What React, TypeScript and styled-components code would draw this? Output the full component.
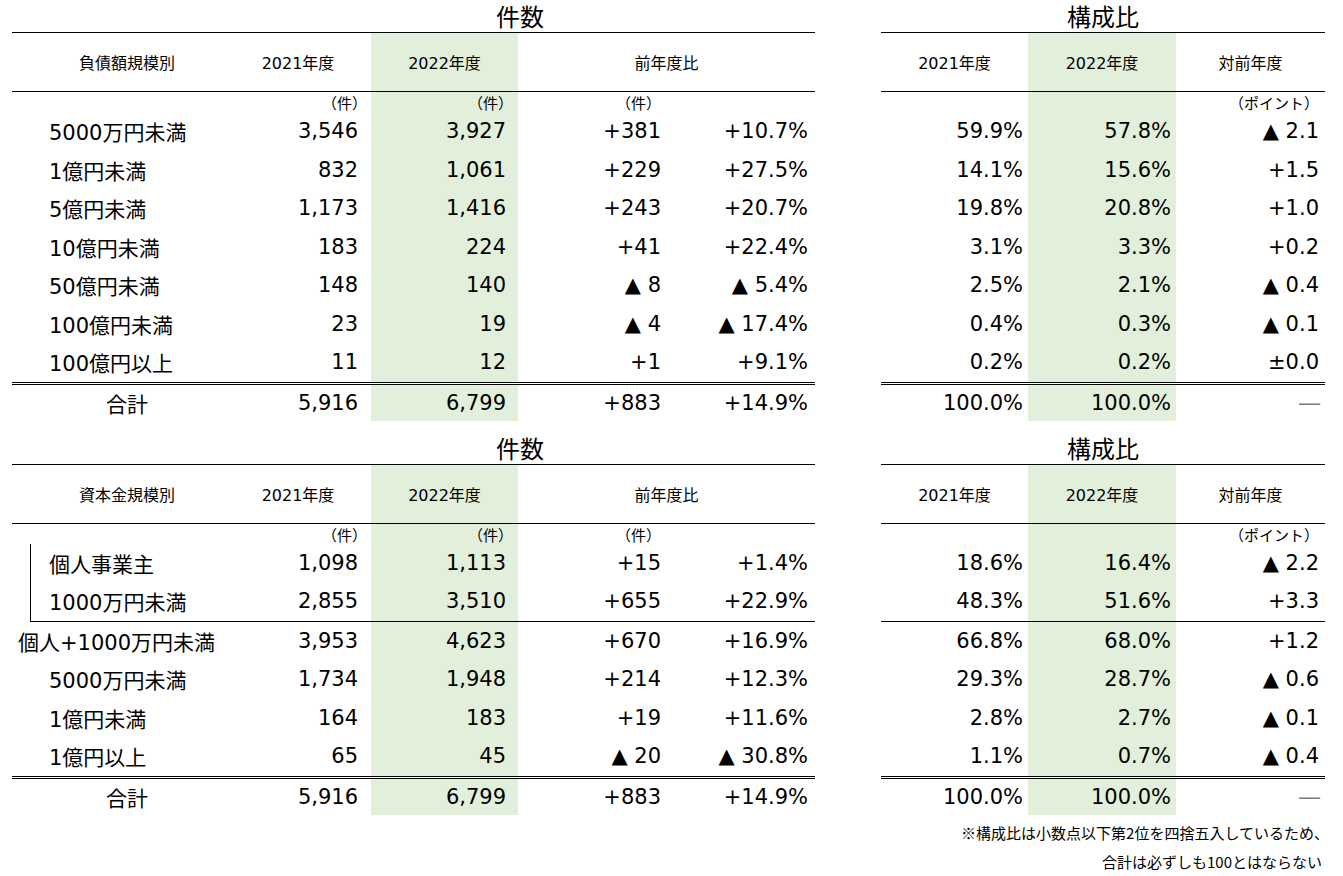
import React from "react";
import styled, { createGlobalStyle } from "styled-components";

const GlobalStyle = createGlobalStyle`
  *, *::before, *::after { box-sizing: border-box; }
  html, body { margin: 0; padding: 0; background: #fff; }
  body {
    font-family: "DejaVu Sans", "Noto Sans CJK JP", sans-serif;
    color: #000;
  }
`;

type Col = { w: number; pad: number; unitPad?: number; green?: boolean };

const LEFT_COLS: Col[] = [
  { w: 213, pad: 0 },
  { w: 146, pad: 13, unitPad: 4 },
  { w: 147, pad: 12, unitPad: 5, green: true },
  { w: 148, pad: 5, unitPad: 5 },
  { w: 149, pad: 7 },
];

const RIGHT_COLS: Col[] = [
  { w: 147, pad: 5 },
  { w: 148, pad: 5, green: true },
  { w: 149, pad: 6, unitPad: 6 },
];

const template = (cols: Col[], firstShrink = 0) =>
  cols.map((c, i) => `${i === 0 ? c.w - firstShrink : c.w}px`).join(" ");

const Page = styled.div`
  width: 1343px;
  padding-left: 12px;
`;

const Section = styled.div<{ $top: number }>`
  display: flex;
  gap: 66px;
  margin-top: ${(p) => p.$top}px;
`;

const TableBox = styled.div<{ $width: number }>`
  width: ${(p) => p.$width}px;
  display: flex;
  flex-direction: column;
`;

const Title = styled.div<{ $shift: number }>`
  height: 32px;
  line-height: 32px;
  font-size: 24px;
  text-align: center;
  padding-left: ${(p) => p.$shift}px;
  font-family: "Noto Sans CJK JP", sans-serif;
`;

const Row = styled.div<{ $cols: string; $h: number; $line?: "single" | "double" }>`
  display: grid;
  grid-template-columns: ${(p) => p.$cols};
  height: ${(p) => p.$h}px;
  font-size: 21px;
  border-top: ${(p) =>
    p.$line === "double" ? "3px double #000" : p.$line === "single" ? "1px solid #000" : "none"};
`;

const HeaderRow = styled(Row)`
  font-size: 16px;
  border-top: 1px solid #000;
  border-bottom: 1px solid #000;
`;

const UnitRow = styled(Row)`
  font-size: 15px;
  font-family: "Noto Sans CJK JP", sans-serif;
`;

const Cell = styled.div<{
  $align?: "left" | "right" | "center";
  $pr?: number;
  $pl?: number;
  $green?: boolean;
  $span?: number;
  $muted?: boolean;
}>`
  display: flex;
  align-items: center;
  justify-content: ${(p) =>
    p.$align === "left" ? "flex-start" : p.$align === "center" ? "center" : "flex-end"};
  padding-right: ${(p) => p.$pr ?? 0}px;
  padding-left: ${(p) => p.$pl ?? 0}px;
  background: ${(p) => (p.$green ? "#e2efda" : "transparent")};
  grid-column: span ${(p) => p.$span ?? 1};
  white-space: nowrap;
  color: ${(p) => (p.$muted ? "#7a7a7a" : "#000")};
`;

const Group = styled.div<{ $bracket?: boolean }>`
  margin-left: ${(p) => (p.$bracket ? 18 : 0)}px;
  border-left: ${(p) => (p.$bracket ? "1px solid #000" : "none")};
  border-bottom: 1px solid #000;
`;

const Notes = styled.div`
  margin-top: 3px;
  font-family: "Noto Sans CJK JP", sans-serif;
  font-size: 15px;
  line-height: 29px;
  text-align: right;
`;

const NoteLine = styled.div<{ $pr: number }>`
  padding-right: ${(p) => p.$pr}px;
`;

type DataRow = { label: string; indent: number; left: string[]; right: string[] };

const ROW_H = 38.5;

const LabelRow = ({ cols, r, shrink = 0 }: { cols: Col[]; r: DataRow; shrink?: number }) => (
  <Row $cols={template(cols, shrink)} $h={ROW_H}>
    <Cell $align="left" $pl={r.indent}>
      {r.label}
    </Cell>
    {r.left.map((v, i) => (
      <Cell key={i} $pr={cols[i + 1].pad} $green={cols[i + 1].green}>
        {v}
      </Cell>
    ))}
  </Row>
);

const ValueRow = ({ r }: { r: DataRow }) => (
  <Row $cols={template(RIGHT_COLS)} $h={ROW_H}>
    {r.right.map((v, i) => (
      <Cell key={i} $pr={RIGHT_COLS[i].pad} $green={RIGHT_COLS[i].green}>
        {v}
      </Cell>
    ))}
  </Row>
);

const LeftHeader = ({ label }: { label: string }) => (
  <>
    <HeaderRow $cols={template(LEFT_COLS)} $h={60}>
      <Cell $align="center" $pl={17}>
        {label}
      </Cell>
      <Cell $align="center">2021年度</Cell>
      <Cell $align="center" $green>
        2022年度
      </Cell>
      <Cell $align="center" $span={2}>
        前年度比
      </Cell>
    </HeaderRow>
    <UnitRow $cols={template(LEFT_COLS)} $h={20}>
      <Cell />
      <Cell $pr={LEFT_COLS[1].unitPad}>（件）</Cell>
      <Cell $pr={LEFT_COLS[2].unitPad} $green>
        （件）
      </Cell>
      <Cell $pr={LEFT_COLS[3].unitPad}>（件）</Cell>
      <Cell />
    </UnitRow>
  </>
);

const RightHeader = () => (
  <>
    <HeaderRow $cols={template(RIGHT_COLS)} $h={60}>
      <Cell $align="center">2021年度</Cell>
      <Cell $align="center" $green>
        2022年度
      </Cell>
      <Cell $align="center">対前年度</Cell>
    </HeaderRow>
    <UnitRow $cols={template(RIGHT_COLS)} $h={20}>
      <Cell />
      <Cell $green />
      <Cell $pr={RIGHT_COLS[2].unitPad}>（ポイント）</Cell>
    </UnitRow>
  </>
);

const LeftTotal = () => (
  <Row $cols={template(LEFT_COLS)} $h={39} $line="double">
    <Cell $align="center" $pl={17}>
      合計
    </Cell>
    {["5,916", "6,799", "+883", "+14.9%"].map((v, i) => (
      <Cell key={i} $pr={LEFT_COLS[i + 1].pad} $green={LEFT_COLS[i + 1].green}>
        {v}
      </Cell>
    ))}
  </Row>
);

const RightTotal = () => (
  <Row $cols={template(RIGHT_COLS)} $h={39} $line="double">
    <Cell $pr={5}>100.0%</Cell>
    <Cell $pr={5} $green>
      100.0%
    </Cell>
    <Cell $pr={5} $muted>
      ―
    </Cell>
  </Row>
);

const debtRows: DataRow[] = [
  { label: "5000万円未満", indent: 37, left: ["3,546", "3,927", "+381", "+10.7%"], right: ["59.9%", "57.8%", "▲ 2.1"] },
  { label: "1億円未満", indent: 37, left: ["832", "1,061", "+229", "+27.5%"], right: ["14.1%", "15.6%", "+1.5"] },
  { label: "5億円未満", indent: 37, left: ["1,173", "1,416", "+243", "+20.7%"], right: ["19.8%", "20.8%", "+1.0"] },
  { label: "10億円未満", indent: 37, left: ["183", "224", "+41", "+22.4%"], right: ["3.1%", "3.3%", "+0.2"] },
  { label: "50億円未満", indent: 37, left: ["148", "140", "▲ 8", "▲ 5.4%"], right: ["2.5%", "2.1%", "▲ 0.4"] },
  { label: "100億円未満", indent: 37, left: ["23", "19", "▲ 4", "▲ 17.4%"], right: ["0.4%", "0.3%", "▲ 0.1"] },
  { label: "100億円以上", indent: 37, left: ["11", "12", "+1", "+9.1%"], right: ["0.2%", "0.2%", "±0.0"] },
];

const soloRows: DataRow[] = [
  { label: "個人事業主", indent: 18, left: ["1,098", "1,113", "+15", "+1.4%"], right: ["18.6%", "16.4%", "▲ 2.2"] },
  { label: "1000万円未満", indent: 18, left: ["2,855", "3,510", "+655", "+22.9%"], right: ["48.3%", "51.6%", "+3.3"] },
];

const capitalRows: DataRow[] = [
  { label: "個人+1000万円未満", indent: 6, left: ["3,953", "4,623", "+670", "+16.9%"], right: ["66.8%", "68.0%", "+1.2"] },
  { label: "5000万円未満", indent: 37, left: ["1,734", "1,948", "+214", "+12.3%"], right: ["29.3%", "28.7%", "▲ 0.6"] },
  { label: "1億円未満", indent: 37, left: ["164", "183", "+19", "+11.6%"], right: ["2.8%", "2.7%", "▲ 0.1"] },
  { label: "1億円以上", indent: 37, left: ["65", "45", "▲ 20", "▲ 30.8%"], right: ["1.1%", "0.7%", "▲ 0.4"] },
];

const App = () => (
  <Page>
    <GlobalStyle />
    <Section $top={0}>
      <TableBox $width={803}>
        <Title $shift={213}>件数</Title>
        <LeftHeader label="負債額規模別" />
        {debtRows.map((r) => (
          <LabelRow key={r.label} cols={LEFT_COLS} r={r} />
        ))}
        <LeftTotal />
      </TableBox>
      <TableBox $width={444}>
        <Title $shift={0}>構成比</Title>
        <RightHeader />
        {debtRows.map((r) => (
          <ValueRow key={r.label} r={r} />
        ))}
        <RightTotal />
      </TableBox>
    </Section>

    <Section $top={11}>
      <TableBox $width={803}>
        <Title $shift={213}>件数</Title>
        <LeftHeader label="資本金規模別" />
        <Group $bracket>
          {soloRows.map((r) => (
            <LabelRow key={r.label} cols={LEFT_COLS} r={r} shrink={19} />
          ))}
        </Group>
        {capitalRows.map((r) => (
          <LabelRow key={r.label} cols={LEFT_COLS} r={r} />
        ))}
        <LeftTotal />
      </TableBox>
      <TableBox $width={444}>
        <Title $shift={0}>構成比</Title>
        <RightHeader />
        <Group>
          {soloRows.map((r) => (
            <ValueRow key={r.label} r={r} />
          ))}
        </Group>
        {capitalRows.map((r) => (
          <ValueRow key={r.label} r={r} />
        ))}
        <RightTotal />
      </TableBox>
    </Section>

    <Notes>
      <NoteLine $pr={14}>※構成比は小数点以下第2位を四捨五入しているため、</NoteLine>
      <NoteLine $pr={21}>合計は必ずしも100とはならない</NoteLine>
    </Notes>
  </Page>
);

export default App;
